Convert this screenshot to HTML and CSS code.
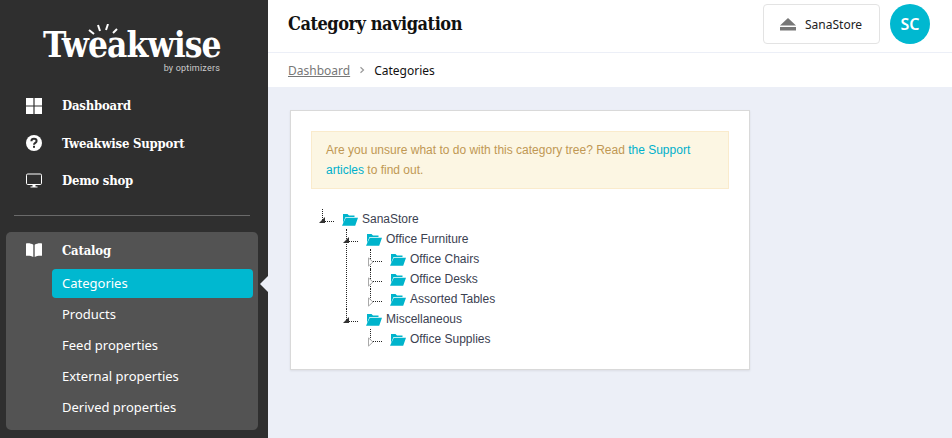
FILE: index.html
```html
<!DOCTYPE html>
<html lang="en">
<head>
<meta charset="utf-8">
<title>Category navigation</title>
<link rel="stylesheet" href="styles.css">
</head>
<body>
<div class="app">
  <aside class="sidebar">
    <div class="logo">
      <svg class="rays" viewBox="0 0 34 14" width="34" height="14"><g stroke="#fff" stroke-width="2" stroke-linecap="butt"><path d="M2 6l5 4"/><path d="M11 1l2 6"/><path d="M21 0l-2 6"/><path d="M30 5l-4 4"/></g></svg>
      <div class="logo-word">Tweakwise</div>
      <div class="logo-sub">by optimizers</div>
    </div>
    <nav class="main-nav">
      <a class="nav-item">
        <svg class="nav-icon" viewBox="0 0 16 16"><path fill="#fff" d="M0 0h7.400v7.400H0zM8.600 0H16v7.400H8.600zM0 8.600h7.400V16H0zM8.600 8.600H16V16H8.600z"/></svg>
        <span>Dashboard</span>
      </a>
      <a class="nav-item">
        <svg class="nav-icon" viewBox="0 0 16 16"><circle cx="8" cy="8" r="8" fill="#fff"/><path fill="none" stroke="#2f2f2f" stroke-width="2" d="M5.400 6.200c0-1.600 1.200-2.400 2.600-2.400s2.600.9 2.600 2.200c0 1.900-2.600 1.900-2.600 3.800"/><rect x="7" y="10.800" width="2" height="2" fill="#2f2f2f"/></svg>
        <span>Tweakwise Support</span>
      </a>
      <a class="nav-item">
        <svg class="nav-icon" viewBox="0 0 16 16"><rect x=".5" y="1" width="15" height="10.500" rx="1.200" fill="none" stroke="#fff"/><path fill="#fff" d="M6.500 12h3v1.600h2v.9h-7v-.9h2z"/></svg>
        <span>Demo shop</span>
      </a>
    </nav>
    <hr class="divider">
    <section class="catalog">
      <div class="catalog-head">
        <svg class="nav-icon" viewBox="0 0 16 16"><path fill="#fff" d="M0 1.500c2.600-.5 5.400 0 7.300 1.300V15C5.400 13.800 2.600 13.400 0 13.800zM16 1.500c-2.600-.5-5.400 0-7.300 1.300V15c1.900-1.200 4.700-1.600 7.300-1.200z"/></svg>
        <span>Catalog</span>
      </div>
      <ul class="sub-nav">
        <li class="active">Categories</li>
        <li>Products</li>
        <li>Feed properties</li>
        <li>External properties</li>
        <li>Derived properties</li>
      </ul>
      <span class="pointer"></span>
    </section>
  </aside>
  <main class="main">
    <header class="topbar">
      <h1>Category navigation</h1>
      <div class="top-actions">
        <button class="store-btn">
          <svg viewBox="0 0 16 13" width="16" height="13"><path fill="#777" d="M8 0l8 7.500H0zM0 9h16v3.500H0z"/></svg>
          <span>SanaStore</span>
        </button>
        <div class="avatar">SC</div>
      </div>
    </header>
    <div class="crumbs">
      <a>Dashboard</a>
      <svg viewBox="0 0 6 8" width="6" height="8"><path fill="none" stroke="#999" stroke-width="1.200" d="M1.500 1.200L4.500 4 1.500 6.800"/></svg>
      <span>Categories</span>
    </div>
    <div class="content">
      <div class="card">
        <div class="alert">Are you unsure what to do with this category tree? Read <a>the Support articles</a> to find out.</div>
        <ul class="tree root">
          <li class="open">
            <div class="row"><span class="toggle"></span><svg class="folder" viewBox="0 0 16 12"><path fill="#00b4cc" d="M1 0h4.500l1.500 1.500h5.500V3H3.500L1 9zM3.800 3.800H16l-2.800 8H0z"/></svg><span class="label">SanaStore</span></div>
            <ul class="tree">
              <li class="open">
                <div class="row"><span class="toggle"></span><svg class="folder" viewBox="0 0 16 12"><path fill="#00b4cc" d="M1 0h4.500l1.500 1.500h5.500V3H3.500L1 9zM3.800 3.800H16l-2.800 8H0z"/></svg><span class="label">Office Furniture</span></div>
                <ul class="tree">
                  <li><div class="row"><span class="toggle"></span><svg class="folder" viewBox="0 0 16 12"><path fill="#00b4cc" d="M1 0h4.500l1.500 1.500h5.500V3H3.500L1 9zM3.800 3.800H16l-2.800 8H0z"/></svg><span class="label">Office Chairs</span></div></li>
                  <li><div class="row"><span class="toggle"></span><svg class="folder" viewBox="0 0 16 12"><path fill="#00b4cc" d="M1 0h4.500l1.500 1.500h5.500V3H3.500L1 9zM3.800 3.800H16l-2.800 8H0z"/></svg><span class="label">Office Desks</span></div></li>
                  <li><div class="row"><span class="toggle"></span><svg class="folder" viewBox="0 0 16 12"><path fill="#00b4cc" d="M1 0h4.500l1.500 1.500h5.500V3H3.500L1 9zM3.800 3.800H16l-2.800 8H0z"/></svg><span class="label">Assorted Tables</span></div></li>
                </ul>
              </li>
              <li class="open">
                <div class="row"><span class="toggle"></span><svg class="folder" viewBox="0 0 16 12"><path fill="#00b4cc" d="M1 0h4.500l1.500 1.500h5.500V3H3.500L1 9zM3.800 3.800H16l-2.800 8H0z"/></svg><span class="label">Miscellaneous</span></div>
                <ul class="tree">
                  <li><div class="row"><span class="toggle"></span><svg class="folder" viewBox="0 0 16 12"><path fill="#00b4cc" d="M1 0h4.500l1.500 1.500h5.500V3H3.500L1 9zM3.800 3.800H16l-2.800 8H0z"/></svg><span class="label">Office Supplies</span></div></li>
                </ul>
              </li>
            </ul>
          </li>
        </ul>
      </div>
    </div>
  </main>
</div>
</body>
</html>
```
FILE: styles.css
```css
* { box-sizing: border-box; }
html, body { margin: 0; height: 100%; overflow: hidden; }
body { font-family: "Noto Sans", sans-serif; font-size: 13px; background: #eceff7; }
.app { display: flex; height: 438px; }

.sidebar { width: 268px; flex: none; background: #2f2f2f; color: #fff; padding: 24px 10px 0 6px; }
.logo { position: relative; width: 178px; margin-left: 37px; height: 58px; text-align: right; }
.rays { position: absolute; left: 44px; top: 0; }
.logo-word { font-family: "DejaVu Serif Condensed", "DejaVu Serif", serif; font-weight: 700; font-size: 35px; line-height: 36px; padding-top: 3px; letter-spacing: -.9px; text-align: left; white-space: nowrap; }
.logo-sub { font-family: Roboto, sans-serif; font-size: 9px; line-height: 11px; letter-spacing: .2px; color: #ccc; padding-right: 1px; }

.main-nav { margin-top: 5px; }
.nav-item { display: flex; align-items: center; height: 37.5px; padding-left: 20px; font-family: "DejaVu Serif Condensed", "DejaVu Serif", serif; font-weight: 700; font-size: 13px; letter-spacing: -.2px; }
.nav-icon { width: 16px; height: 16px; flex: none; margin-right: 20px; }
.divider { border: 0; border-top: 1px solid #6a6a6a; margin: 15.5px 0 16px 8px; width: 236px; }

.catalog { position: relative; background: #535353; border-radius: 5px; width: 252px; height: 198px; padding-top: 4px; }
.catalog-head { display: flex; align-items: center; height: 28px; padding-left: 20px; font-family: "DejaVu Serif Condensed", "DejaVu Serif", serif; font-weight: 700; font-size: 13px; letter-spacing: -.2px; }
.sub-nav { list-style: none; margin: 5px 0 0 46px; padding: 0; width: 201px; }
.sub-nav li { height: 31px; line-height: 29px; padding-left: 10px; font-size: 13px; }
.sub-nav .active { height: 29px; margin-bottom: 2px; line-height: 28px; background: #00b8d0; border-radius: 4px; }
.pointer { position: absolute; left: 254px; top: 44px; width: 0; height: 0; border: 8px solid transparent; border-left: 0; border-right-color: #eceff7; }

.main { flex: 1; min-width: 0; display: flex; flex-direction: column; }
.topbar { height: 53px; background: #fff; border-bottom: 1px solid #eceff7; display: flex; align-items: flex-start; justify-content: space-between; padding: 4px 22px 0 20px; }
h1 { margin: 0; font-family: "DejaVu Serif Condensed", "DejaVu Serif", serif; font-size: 18px; line-height: 40px; font-weight: 700; color: #111; letter-spacing: -.46px; }
.top-actions { display: flex; gap: 10px; }
.store-btn { display: flex; align-items: center; gap: 9px; width: 117px; height: 40px; padding: 0 0 0 16px; background: #fff; border: 1px solid #e3e3e3; border-radius: 4px; font: 12px "Noto Sans", sans-serif; color: #222; }
.avatar { width: 40px; height: 40px; border-radius: 50%; background: #00b8d0; color: #fff; display: flex; align-items: center; justify-content: center; font-size: 16px; font-weight: 600; }
.crumbs { height: 34px; background: #fff; display: flex; align-items: center; gap: 8px; padding: 0 20px; font-size: 12px; color: #111; }
.crumbs a { color: #777; text-decoration: underline; margin-right: 1px; }
.crumbs span { margin-left: 1px; }

.content { flex: 1; padding: 23px 22px; }
.card { width: 460px; height: 260px; background: #fff; border: 1px solid #d9d9d9; box-shadow: 0 1px 2px rgba(0,0,0,.08); padding: 20px; }
.alert { width: 418px; height: 58px; background: #fcf6e3; border: 1px solid #faebcc; padding: 8px 14px; font: 12px/20px "Liberation Sans", sans-serif; color: #c09853; }
.alert a { color: #00b0cb; }

.tree { list-style: none; margin: 0; padding: 0; font: 12px/20px "Liberation Sans", sans-serif; color: #3b4151; }
.root { margin-top: 20px; margin-left: 7px; }
.tree .tree { margin-left: 24px; }
.tree li { position: relative; }
.tree li::before { content: ""; position: absolute; left: 4px; top: 0; bottom: 0; border-left: 1px dotted #222; }
.tree li:last-child::before { bottom: auto; height: 11px; }
.row { position: relative; display: flex; align-items: center; height: 20px; }
.toggle { position: relative; width: 22px; height: 20px; flex: none; }
.toggle::before { content: ""; position: absolute; left: 7px; top: 12px; width: 9px; border-top: 1px dotted #222; }
.toggle::after { content: ""; position: absolute; background-repeat: no-repeat; }
.open > .row .toggle::after { left: 1px; top: 8px; width: 6px; height: 6px; background-image: url("data:image/svg+xml,%3Csvg xmlns='http://www.w3.org/2000/svg' width='6' height='6'%3E%3Cpath fill='%23333' d='M6 0v6H0z'/%3E%3C/svg%3E"); }
li:not(.open) > .row .toggle::after { left: 2px; top: 8px; width: 6px; height: 10px; background-image: url("data:image/svg+xml,%3Csvg xmlns='http://www.w3.org/2000/svg' width='6' height='10'%3E%3Cpath fill='%23fff' stroke='%23aaa' d='M.5.9L5 5 .5 9.100z'/%3E%3C/svg%3E"); }
.folder { width: 16px; height: 12px; flex: none; margin: 2px 4px 0 2px; }
.label { white-space: nowrap; }
```
